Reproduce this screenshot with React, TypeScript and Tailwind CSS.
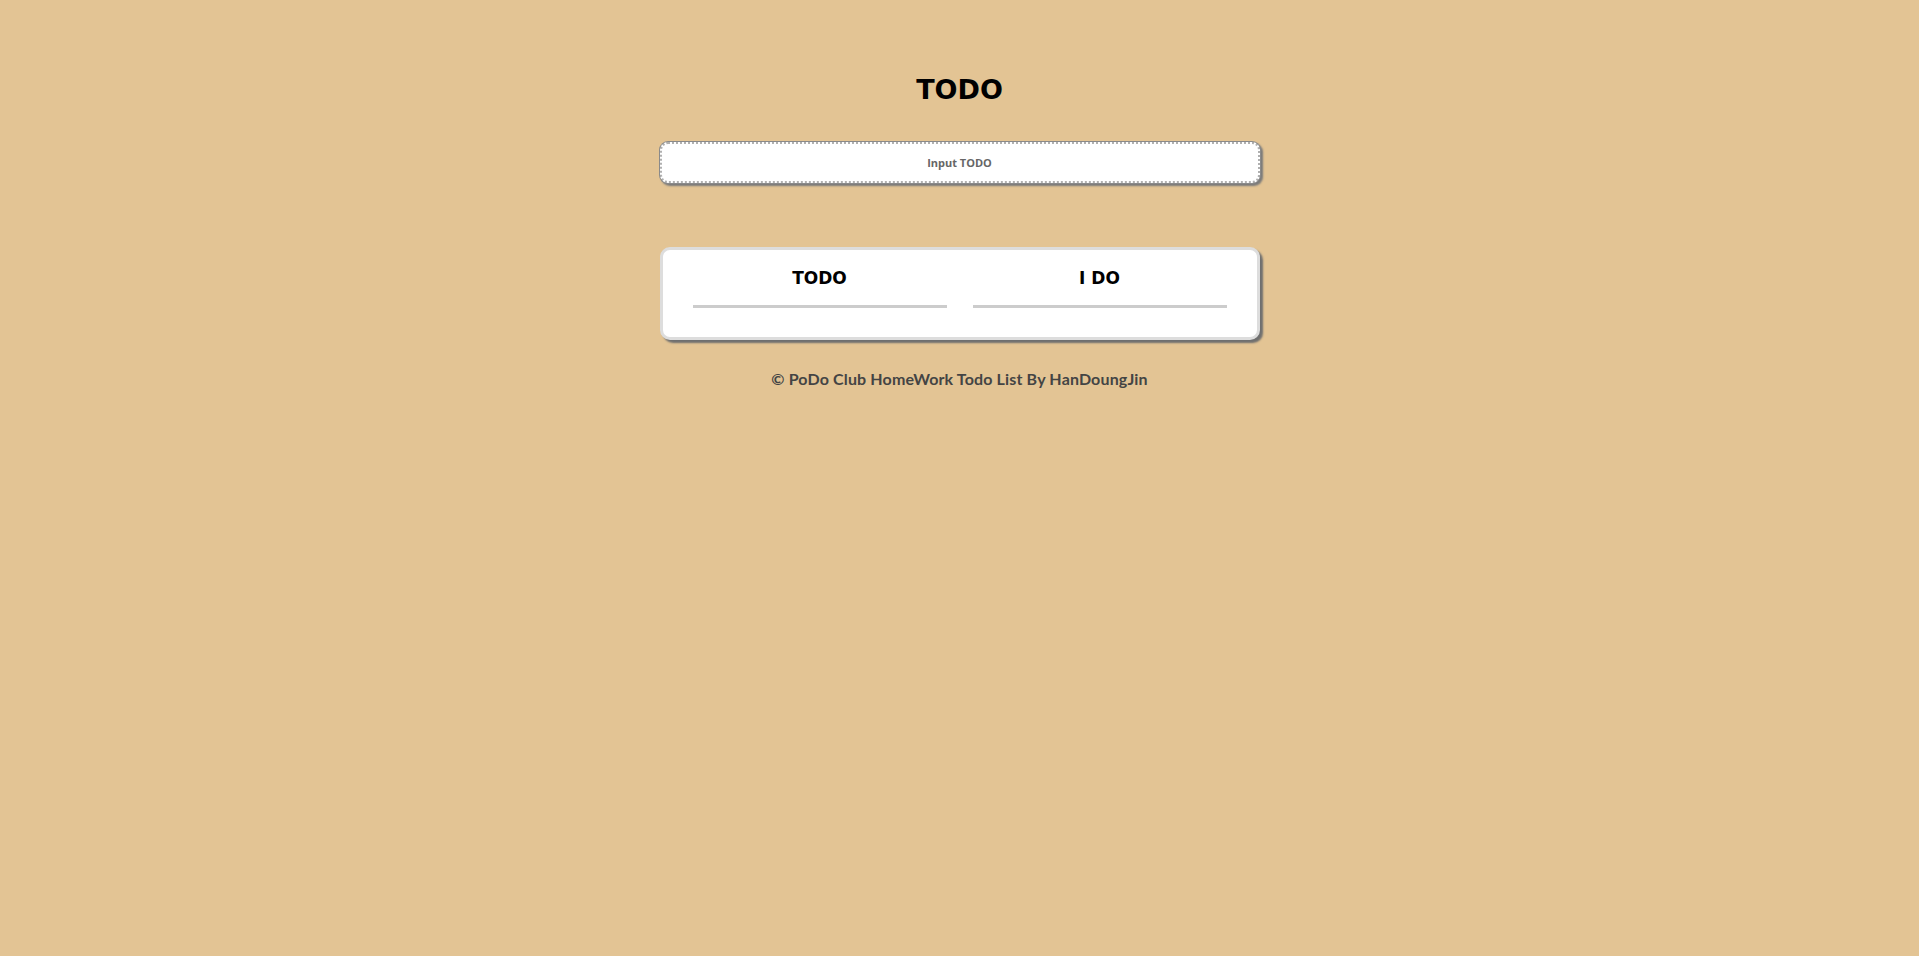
export default function App() {
  return (
    <div className="min-h-screen bg-[#e3c494] flex flex-col items-center pt-[72px]" style={{ fontFamily: '"DejaVu Sans", sans-serif' }}>
      <h1 className="text-[27px] font-bold leading-[36px] text-black">TODO</h1>
      <div className="mt-[34px] w-[600px] h-[41px] rounded-[8px] bg-white border-2 border-dotted border-[#b0b0b0] shadow-[0_0_0_1px_#8a8a8a,2px_2px_2px_1px_#7a7a7a] flex items-center justify-center">
        <input
          className="w-full h-full bg-transparent outline-none text-center text-[11px] font-bold placeholder:text-[#666] text-[#666]"
          style={{ fontFamily: '"Open Sans", sans-serif' }}
          placeholder="Input TODO"
        />
      </div>
      <div className="mt-[64px] w-[600px] h-[93px] rounded-[10px] bg-white border-[3px] border-[#dddddd] shadow-[3px_3px_2px_#6f6f6f]">
        <div className="grid grid-cols-2 gap-[26px] px-[30px] pt-[16px]">
          <div className="flex flex-col items-center">
            <div className="text-[17px] font-bold leading-[24px] text-black">TODO</div>
            <div className="mt-[15px] h-[3px] w-full bg-[#cccccc]" />
          </div>
          <div className="flex flex-col items-center">
            <div className="text-[17px] font-bold leading-[24px] text-black">I DO</div>
            <div className="mt-[15px] h-[3px] w-full bg-[#cccccc]" />
          </div>
        </div>
      </div>
      <div className="mt-[29px] text-[16px] font-bold leading-[20px] tracking-[0.15px] text-[#444]" style={{ fontFamily: 'Lato, sans-serif' }}>
        © PoDo Club HomeWork Todo List By HanDoungJin
      </div>
    </div>
  );
}
